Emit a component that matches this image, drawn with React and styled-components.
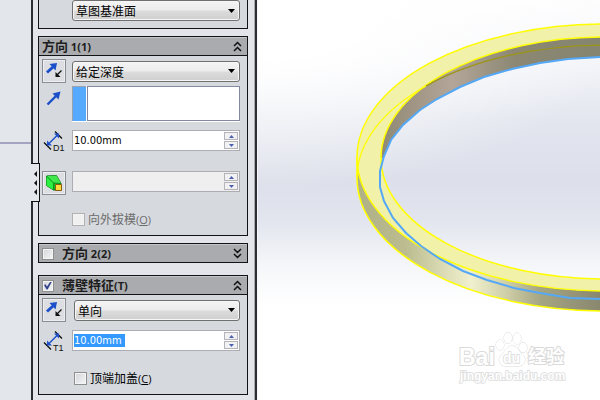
import React, { useEffect, useRef, useState } from "react";
import styled, { createGlobalStyle } from "styled-components";

const GlobalStyle = createGlobalStyle`
  * {
    box-sizing: border-box;
  }

  body {
    margin: 0;
    background: #e3e7ec;
    color: #000;
    font-family: "DejaVu Sans Condensed", "Noto Sans CJK SC", sans-serif;
    font-size: 11px;
  }

  button,
  input,
  select {
    margin: 0;
    padding: 0;
    color: inherit;
    font: inherit;
  }
`;

const Page = styled.div`
  display: flex;
  min-height: 100vh;
  overflow: hidden;
`;

const Gutter = styled.div`
  flex: 0 0 31px;
  padding-top: 142px;

  &::before {
    content: "";
    display: block;
    height: 2px;
    background: #a3a4bf;
  }
`;

const Panel = styled.aside`
  position: relative;
  flex: 0 0 226px;
  padding: 0 7px 5px 5px;
  border-left: 2px solid #2c2e34;
  border-right: 2px solid #2c2e34;
  background: #e3e5eb;
  box-shadow: inset -1px 0 0 #a9abb2;
`;

const Handle = styled.button`
  position: absolute;
  top: 163px;
  left: -2px;
  display: flex;
  flex-direction: column;
  align-items: center;
  justify-content: center;
  gap: 3px;
  width: 9px;
  height: 39px;
  border: 1px solid #111;
  border-left: 0;
  background: #e3e7ec;
`;

const Group = styled.section`
  margin-top: ${props => props.gap || 0}px;
  border: 1px solid #111317;
  border-top-width: ${props => (props.$first ? 0 : 1)}px;
  background: #d6d9de;
`;

const Header = styled.header`
  display: flex;
  align-items: center;
  height: 18px;
  padding: 0 5px 0 3px;
  border-top: 1px solid #c3c5c8;
  background: #a9abae;
`;

const Title = styled.h2`
  flex: 1;
  display: flex;
  align-items: center;
  gap: 8px;
  margin: 0;
  color: #1d1d20;
  font-family: "Open Sans", "Noto Sans CJK SC", sans-serif;
  font-size: 11px;
  font-weight: 700;
  line-height: 16px;

  span {
    font-size: 13px;
  }
`;

const Toggle = styled.button`
  display: flex;
  border: 0;
  background: none;
`;

const Body = styled.div`
  padding: ${props => (props.$first ? "0 7px 7px 3px" : "3px 7px 9px 3px")};
  border-top: ${props => (props.$first ? 0 : 1)}px solid #111317;
`;

const Row = styled.div`
  display: flex;
  align-items: ${props => props.$align || "flex-start"};
  gap: 6px;
  margin-top: ${props => props.gap || 0}px;
`;

const IconCell = styled.span`
  flex: 0 0 24px;
  display: flex;
  justify-content: center;
`;

const IconButton = styled.button`
  flex: 0 0 24px;
  display: flex;
  align-items: center;
  justify-content: center;
  height: 24px;
  border: 1px solid #8b8d92;
  background: #dcdee2;
  box-shadow: inset 0 0 0 1px #eceef1;
`;

const Control = styled.div`
  flex: 1;
  min-width: 0;
  padding-left: ${props => (props.$indent ? 2 : 0)}px;
`;

const Combo = styled.div`
  display: grid;
  align-items: center;

  select {
    grid-area: 1 / 1;
    width: 100%;
    height: 21px;
    padding: 0 20px 0 3px;
    border: 1px solid #707070;
    border-radius: 3px;
    appearance: none;
    background: linear-gradient(#f4f4f4 0%, #ececec 48%, #dcdcdc 52%, #cfcfcf 100%);
    box-shadow: inset 0 0 0 1px #f6f6f6;
    color: #000;
    font-family: "Noto Sans CJK SC", sans-serif;
    font-size: 12px;
  }

  svg {
    grid-area: 1 / 1;
    justify-self: end;
    margin-right: 5px;
    pointer-events: none;
  }
`;

const Selection = styled.div`
  flex: 1;
  display: flex;
  gap: 1px;
  height: 36px;
  border-bottom: 1px solid #fff;
  background: #fff;

  &::before {
    content: "";
    width: 13px;
    border: 1px solid #9aa2ad;
    border-width: 1px 0 0 1px;
    background: #55aaff;
  }

  input {
    flex: 1;
    min-width: 0;
    padding: 0 3px;
    border: 1px solid #8389a3;
    background: #fff;
  }
`;

const Spin = styled.div`
  flex: 1;
  display: flex;
  height: 21px;
  padding: 1px;
  border: 1px solid #abadb3;
  background: ${props => (props.$off ? "#efefef" : "#fff")};

  input {
    flex: 1;
    min-width: 0;
    border: 0;
    outline: 0;
    background: transparent;
  }

  input::selection {
    background: #3399ff;
    color: #fff;
  }
`;

const Steps = styled.div`
  display: flex;
  flex-direction: column;
  gap: 1px;
  width: 14px;

  button {
    flex: 1;
    display: flex;
    align-items: center;
    justify-content: center;
    border: 1px solid #b4b4b8;
    background: #f1f1f3;
  }
`;

const CheckBox = styled.input`
  display: grid;
  place-content: center;
  width: ${props => (props.$small ? 12 : 13)}px;
  height: ${props => (props.$small ? 12 : 13)}px;
  border: 1px solid #8e8f8f;
  appearance: none;
  background: linear-gradient(135deg, #d2d5da, #f6f6f6);
  box-shadow: inset 0 0 0 1px #f4f4f4;

  &:disabled {
    border-color: #b1b1b1;
    background: #f0f0f0;
  }

  &:checked::before {
    content: "";
    width: 8px;
    height: 8px;
    background: #33428c;
    clip-path: polygon(0 45%, 18% 35%, 38% 62%, 80% 0, 100% 0, 45% 100%, 32% 100%);
  }
`;

const CheckLabel = styled.label`
  display: flex;
  align-items: center;
  gap: 3px;
  height: 13px;
  margin: ${props => props.gap}px 0 0 ${props => (props.$indent ? 32 : 30)}px;
  color: ${props => (props.$off ? "#6d6d6d" : "#000")};
  font-family: "Open Sans", "Noto Sans CJK SC", sans-serif;
  font-size: 12px;
  line-height: 13px;

  small {
    font-size: 11px;
  }
`;

const Viewport = styled.main`
  position: relative;
  flex: 1;
  min-width: 0;
  border-left: 1px solid #f6f5fa;
  background:
    radial-gradient(ellipse 380px 190px at 0 0, #fff 30%, rgba(255, 255, 255, 0) 100%),
    linear-gradient(#fdfdfe 0, #f4f5f9 60px, #e3e6ef 120px, #dddfea 180px, #e2e5ee 220px, #f5f6f9 265px, #fff 305px);

  > svg {
    display: block;
    width: 100%;
    height: 100%;
  }
`;

const Watermark = styled.div`
  position: absolute;
  right: 30px;
  bottom: 10px;
`;

const Chevrons = ({ down }) => (
  <svg width="9" height="11" viewBox="0 0 9 11" fill="none" stroke="#111" strokeWidth="1.5">
    {down ? (
      <path d="M1 1l3.5 3.5L8 1M1 6l3.5 3.5L8 6" />
    ) : (
      <path d="M1 5l3.5-3.5L8 5M1 10l3.5-3.5L8 10" />
    )}
  </svg>
);

const ReverseIcon = () => (
  <svg width="18" height="18" viewBox="0 0 18 18">
    <path d="M2 10.5L8 5" stroke="#1b50ca" strokeWidth="3" />
    <path d="M4.5 2L12 1l-1.500 7.500z" fill="#1b50ca" />
    <path d="M16.5 8.5L12 13" stroke="#111" strokeWidth="1.3" />
    <path d="M10.500 10V15h5z" fill="#111" />
  </svg>
);

const ArrowIcon = () => (
  <svg width="16" height="20" viewBox="0 -4 16 20">
    <path d="M1.5 14.5L10 6" stroke="#1b50ca" strokeWidth="2.4" />
    <path d="M6.5 3.5L14.5 1.5 12.5 9.5z" fill="#1b50ca" />
  </svg>
);

const DimensionIcon = ({ name }) => (
  <svg width="22" height="22" viewBox="0 0 22 22">
    <path d="M1 12.5l7 7M12 1.5l7 7" stroke="#111" strokeWidth="1.3" />
    <path d="M6 13.5L14 5.5" stroke="#1b50ca" strokeWidth="1.4" />
    <path d="M4 15.5V10.5l5 5zM16 3.5V8.5l-5-5z" fill="#1b50ca" />
    <text x="10" y="20.5" fontFamily="Liberation Sans, sans-serif" fontSize="9" fill="#111">
      {name}
    </text>
  </svg>
);

const DraftIcon = () => (
  <svg width="18" height="18" viewBox="0 0 18 18">
    <path d="M1.500 2l10-.5 4.500 8v6.500h-7.500l-7-4.500z" fill="#10c424" stroke="#0b6b18" />
    <path d="M1.500 2l10-.5 4.500 8-7.500-.5z" fill="#3fe64c" />
    <path d="M1.500 2l7 7v7l-7-4.500z" fill="#2cf040" />
    <path d="M1.500 2l7 7 7.500.5M8.500 9v7" fill="none" stroke="#0b7a1b" strokeWidth=".8" />
    <path d="M10.500 10.500h6v6h-6z" fill="#ffdc3c" stroke="#8a5a10" />
  </svg>
);

const SelectBox = ({ label, value }) => (
  <Combo>
    <select aria-label={label} defaultValue={value}>
      <option>{value}</option>
    </select>
    <svg width="7" height="4" viewBox="0 0 7 4">
      <path d="M0 0h7L3.5 4z" fill="#000" />
    </svg>
  </Combo>
);

const SpinBox = ({ label, initial = "", disabled, selected }) => {
  const [value, setValue] = useState(initial);
  const field = useRef(null);

  useEffect(() => {
    if (selected) {
      field.current.focus();
      field.current.select();
    }
  }, [selected]);

  const step = by => setValue(`${(parseFloat(value) + by).toFixed(2)}mm`);

  return (
    <Spin $off={disabled}>
      <input
        ref={field}
        aria-label={label}
        value={value}
        disabled={disabled}
        onChange={e => setValue(e.target.value)}
      />
      <Steps>
        <button aria-label="+" disabled={disabled} onClick={() => step(1)}>
          <svg width="5" height="3" viewBox="0 0 5 3">
            <path d="M0 3h5L2.5 0z" fill="#4a60ad" />
          </svg>
        </button>
        <button aria-label="-" disabled={disabled} onClick={() => step(-1)}>
          <svg width="5" height="3" viewBox="0 0 5 3">
            <path d="M0 0h5L2.5 3z" fill="#4a60ad" />
          </svg>
        </button>
      </Steps>
    </Spin>
  );
};

const edge =
  "600,57 568,59 540,63 512,69 484,77 460,87 437,99 420,110 403,125 391,140 384,156 380,171 380,187 384,201 393,218 406,233 421,246 440,259 463,271 487,280 514,288 540,293 570,298 600,299";

const Ring = () => (
  <svg viewBox="258 0 342 400" preserveAspectRatio="xMinYMin slice" role="img" aria-label="拉伸预览">
    <defs>
      <linearGradient id="outer" gradientUnits="userSpaceOnUse" x1="357" x2="600" y1="0" y2="0">
        <stop offset="0" stopColor="#afb087" />
        <stop offset=".2" stopColor="#bcbc90" />
        <stop offset=".36" stopColor="#dcdcb6" />
        <stop offset=".47" stopColor="#f0f0cf" />
        <stop offset=".6" stopColor="#d2d2ab" />
        <stop offset=".76" stopColor="#a5a482" />
        <stop offset="1" stopColor="#89886f" />
      </linearGradient>
      <linearGradient id="inner" gradientUnits="userSpaceOnUse" x1="380" x2="600" y1="0" y2="0">
        <stop offset="0" stopColor="#8e8975" />
        <stop offset=".15" stopColor="#a09584" />
        <stop offset=".33" stopColor="#b3a699" />
        <stop offset=".46" stopColor="#a19887" />
        <stop offset=".62" stopColor="#8b8773" />
        <stop offset="1" stopColor="#858570" />
      </linearGradient>
      <clipPath id="opening">
        <ellipse cx="605" cy="158" rx="224" ry="121" />
      </clipPath>
      <mask id="wall" maskUnits="userSpaceOnUse" x="258" y="0" width="700" height="400">
        <rect x="258" width="700" height="400" fill="#fff" />
        <polygon points={`960,57 ${edge} 960,299`} fill="#000" />
      </mask>
      <mask id="side" maskUnits="userSpaceOnUse" x="258" y="0" width="700" height="400">
        <rect x="258" width="700" height="400" fill="#fff" />
        <ellipse cx="605" cy="157.5" rx="248" ry="133.5" fill="#000" />
      </mask>
    </defs>
    <path
      d="M357 157V178A248 133 0 0 0 853 178V157z"
      fill="url(#outer)"
      stroke="#ff0"
      strokeWidth="1.5"
      mask="url(#side)"
    />
    <g clipPath="url(#opening)">
      <rect x="370" y="30" width="480" height="128" fill="url(#inner)" mask="url(#wall)" />
    </g>
    <path
      d="M357 157.5a248 133.5 0 1 1 496 0a248 133.5 0 1 1-496 0zM381 158a224 121 0 1 0 448 0a224 121 0 1 0-448 0z"
      fill="#f1f1aa"
      fillRule="evenodd"
      stroke="#ff0"
      strokeWidth="1.5"
    />
    <path d="M357 178A248 133 0 0 1 426 86" fill="none" stroke="#ff0" strokeWidth="1.3" />
    <path d="M426 86A248 133 0 0 1 605 45" fill="none" stroke="#9c9515" strokeWidth="1.3" />
    <polyline points={edge} fill="none" stroke="#55a8f5" strokeWidth="2" />
  </svg>
);

const Brand = () => (
  <svg
    width="112"
    height="56"
    viewBox="458 334 112 56"
    fill="#fff"
    stroke="#dadada"
    strokeWidth="2"
    paintOrder="stroke"
    fontFamily="Liberation Sans, Noto Sans CJK SC, sans-serif"
    fontWeight="700"
  >
    <text x="459" y="368" fontSize="23">Bai</text>
    <g strokeWidth="1">
      <ellipse cx="500" cy="348" rx="4" ry="5" />
      <ellipse cx="508" cy="341" rx="4" ry="5.5" />
      <ellipse cx="517" cy="341.500" rx="4" ry="5.5" />
      <ellipse cx="523" cy="350.500" rx="4" ry="5" />
      <path d="M512 349c5 0 6 4 9 7 4 4 5 6 3 10-2 4-7 3-12 3s-10 1-12-3c-2-4 0-7 3-10 3-3 4-7 9-7z" />
    </g>
    <text x="503" y="366" fontSize="14" strokeWidth="1.5">du</text>
    <text x="528" y="366" fontSize="18">经验</text>
    <text x="460" y="383" fontSize="12" strokeWidth="1.5">jingyan.baidu.com</text>
  </svg>
);

const App = () => (
  <>
    <GlobalStyle />
    <Page>
      <Gutter />
      <Panel>
        <Group $first>
          <Body $first>
            <Row $align="center">
              <IconCell />
              <Control>
                <SelectBox label="从" value="草图基准面" />
              </Control>
            </Row>
          </Body>
        </Group>

        <Group gap={7}>
          <Header>
            <Title>
              <div>
                <span>方向</span> 1(1)
              </div>
            </Title>
            <Toggle aria-label="折叠">
              <Chevrons />
            </Toggle>
          </Header>
          <Body>
            <Row $align="center">
              <IconButton aria-label="反向">
                <ReverseIcon />
              </IconButton>
              <Control>
                <SelectBox label="终止条件" value="给定深度" />
              </Control>
            </Row>
            <Row gap={3}>
              <IconCell>
                <ArrowIcon />
              </IconCell>
              <Selection>
                <input aria-label="拉伸方向" />
              </Selection>
            </Row>
            <Row gap={8}>
              <IconCell>
                <DimensionIcon name="D1" />
              </IconCell>
              <SpinBox label="深度" initial="10.00mm" />
            </Row>
            <Row gap={19}>
              <IconButton aria-label="拔模">
                <DraftIcon />
              </IconButton>
              <SpinBox label="拔模角度" disabled />
            </Row>
            <CheckLabel gap={18} $off>
              <CheckBox type="checkbox" disabled />
              <span>
                向外拔模<small>(<u>O</u>)</small>
              </span>
            </CheckLabel>
          </Body>
        </Group>

        <Group gap={7}>
          <Header>
            <Title>
              <CheckBox type="checkbox" id="second" $small />
              <label htmlFor="second">
                <span>方向</span> 2(2)
              </label>
            </Title>
            <Toggle aria-label="展开">
              <Chevrons down />
            </Toggle>
          </Header>
        </Group>

        <Group gap={12}>
          <Header>
            <Title>
              <CheckBox type="checkbox" id="thin" $small defaultChecked />
              <label htmlFor="thin">
                <span>薄壁特征</span>(T)
              </label>
            </Title>
            <Toggle aria-label="折叠">
              <Chevrons />
            </Toggle>
          </Header>
          <Body>
            <Row $align="center">
              <IconButton aria-label="反向">
                <ReverseIcon />
              </IconButton>
              <Control $indent>
                <SelectBox label="类型" value="单向" />
              </Control>
            </Row>
            <Row gap={8}>
              <IconCell>
                <DimensionIcon name="T1" />
              </IconCell>
              <SpinBox label="厚度" initial="10.00mm " selected />
            </Row>
            <CheckLabel gap={20} $indent>
              <CheckBox type="checkbox" />
              <span>
                顶端加盖<small>(<u>C</u>)</small>
              </span>
            </CheckLabel>
          </Body>
        </Group>

        <Handle aria-label="隐藏面板">
          {[0, 1, 2].map(i => (
            <svg key={i} width="3" height="6" viewBox="0 0 3 6">
              <path d="M3 0v6L0 3z" fill="#111" />
            </svg>
          ))}
        </Handle>
      </Panel>
      <Viewport>
        <Ring />
        <Watermark>
          <Brand />
        </Watermark>
      </Viewport>
    </Page>
  </>
);

export default App;
